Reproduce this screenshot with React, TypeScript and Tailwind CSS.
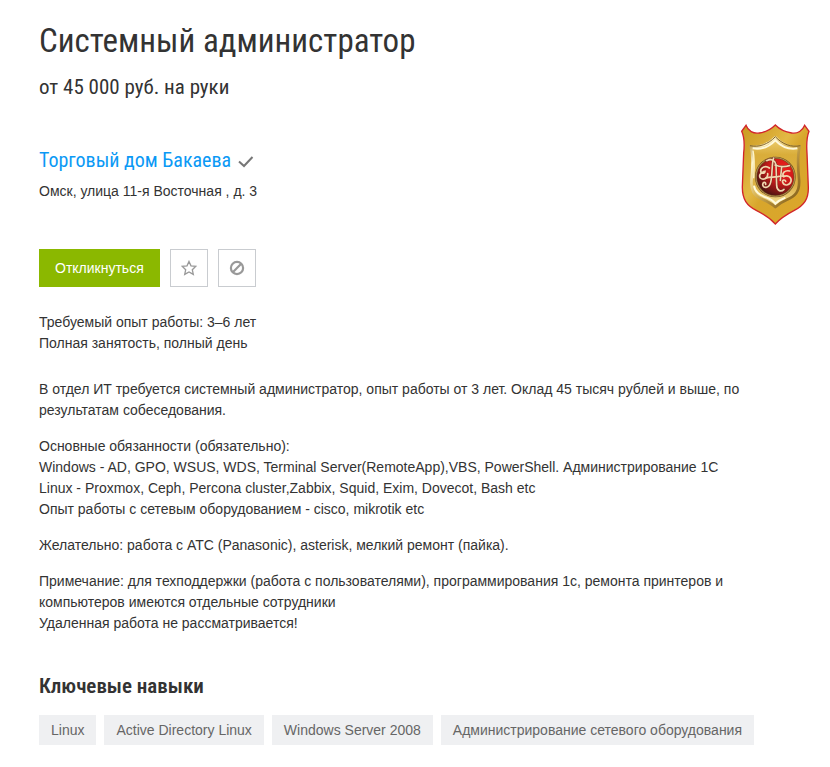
const bodyFont = "font-['Liberation_Sans',Arial,sans-serif]";
const headFont = "font-['Roboto_Condensed',Roboto,sans-serif]";

const skills = ['Linux', 'Active Directory Linux', 'Windows Server 2008', 'Администрирование сетевого оборудования'];

function CompanyLogo() {
  return (
    <svg role="img" aria-label="Торговый дом Бакаева" viewBox="45 25 207 303" className="h-[101px] w-[69px] shrink-0">
      <defs>
        <linearGradient id="gold" x1="0" y1="0" x2="1" y2="1">
          <stop offset="0" stopColor="#c99a20" />
          <stop offset=".25" stopColor="#d9ab35" />
          <stop offset=".4" stopColor="#e3b944" />
          <stop offset=".52" stopColor="#d8a62c" />
          <stop offset="1" stopColor="#dba62a" />
        </linearGradient>
        <linearGradient id="bevel" x1="0" y1="0" x2="1" y2="1">
          <stop offset="0" stopColor="#a8822c" />
          <stop offset=".2" stopColor="#fff6cf" />
          <stop offset=".45" stopColor="#d9b75c" />
          <stop offset=".7" stopColor="#a88231" />
          <stop offset="1" stopColor="#7d5b17" />
        </linearGradient>
        <linearGradient id="face" x1="0" y1="0" x2="0" y2="1">
          <stop offset="0" stopColor="#efd175" />
          <stop offset=".25" stopColor="#d9ad3a" />
          <stop offset=".7" stopColor="#dcb146" />
          <stop offset="1" stopColor="#f6e4a0" />
        </linearGradient>
        <radialGradient id="ruby" cx=".7" cy=".28" r=".75">
          <stop offset="0" stopColor="#f0201c" />
          <stop offset=".5" stopColor="#c91a1a" />
          <stop offset="1" stopColor="#511512" />
        </radialGradient>
      </defs>
      <path d="M60 29C66 46 82 55 100 52C122 49 137 39 148 28C160 40 177 49 197 52C215 55 230 45 236 29L249 47C241 68 241 86 243 112L247 215C248 250 234 269 205 284C180 297 162 309 148 325C133 308 116 297 92 285C62 270 49 251 49 215L53 112C56 86 56 66 47 47Z" fill="url(#gold)" stroke="#d2242a" strokeWidth="4" />
      <path d="M74 92C98 98 128 87 148 65C168 87 197 98 221 92C214 118 215 148 219 190C222 229 207 242 181 253C165 260 156 266 148 274C139 265 126 258 109 251C83 240 74 224 77 190C80 148 82 118 74 92Z" fill="url(#face)" stroke="url(#bevel)" strokeWidth="8" strokeLinejoin="round" />
      <path d="M72 90C98 96 127 86 148 63C169 86 197 96 223 90" fill="none" stroke="#846423" strokeWidth="3" />
      <path d="M80 98C104 102 130 93 148 74C166 93 190 102 214 98" fill="none" stroke="#fff9dc" strokeWidth="6" />
      <path d="M81 105C87 130 85 155 83 188" fill="none" stroke="#fff5c8" strokeWidth="4" />
      <path d="M84 210C86 230 103 238 122 246C135 251 143 257 148 264C156 256 165 251 178 246" fill="none" stroke="#fffadb" strokeWidth="6" />
      <circle cx="148" cy="184" r="58" fill="url(#ruby)" stroke="#73511f" strokeWidth="6" />
      <circle cx="148" cy="184" r="58" fill="none" stroke="#d5b16a" strokeWidth="2" />
      <g transform="translate(83 118)" fill="none" strokeLinecap="round">
        <g stroke="#6b1d17" strokeWidth="7">
          <path d="M39 17C52 10 64 15 67 29L69 92C70 108 82 112 91 103" />
          <path d="M60 9C53 30 57 58 51 82C46 101 28 101 27 89" />
          <path d="M64 30C79 36 90 37 107 32M84 36L80 75" />
        </g>
        <g stroke="#f0d7b0" strokeWidth="5">
          <path d="M39 17C52 10 64 15 67 29L69 92C70 108 82 112 91 103" />
          <path d="M60 9C53 30 57 58 51 82C46 101 28 101 27 89C27 80 37 80 36 88" />
          <path d="M64 30C79 36 90 37 107 32M84 36L80 76" />
          <path d="M47 39C37 31 22 36 21 47C21 57 34 57 34 49C22 51 14 61 20 69C29 77 44 69 42 56" />
          <path d="M108 48C94 45 83 54 90 65C101 58 115 67 112 79C108 92 91 94 87 82C84 75 94 72 96 79" />
          <path d="M36 70C49 64 59 68 72 65C79 63 84 62 92 64" />
        </g>
      </g>
    </svg>
  );
}

export default function App() {
  return (
    <main className={`${bodyFont} bg-white pt-5 pr-5 pb-5 pl-[39px] text-sm leading-[21px] text-[#333]`}>
      <header>
        <h1 className={`${headFont} text-[33px] leading-[42px]`}>Системный администратор</h1>
        <p className={`${headFont} mt-3 text-[21px] leading-[26px]`}>от 45 000 руб. на руки</p>
      </header>

      <section className="mt-6 flex items-start justify-between">
        <div className="pt-[23px]">
          <div className="flex items-center gap-[7px]">
            <a href="#company" className={`${headFont} text-[20px] leading-[26px] text-[#0b99f5]`}>Торговый дом Бакаева</a>
            <svg aria-label="Проверенная компания" viewBox="0 0 16 14" className="mt-1 h-3.5 w-4" fill="none" stroke="#777" strokeWidth="2">
              <path d="M1 6.5L6 11L14.5 2" />
            </svg>
          </div>
          <p className="mt-2">Омск, улица 11-я Восточная , д. 3</p>
        </div>
        <CompanyLogo />
      </section>

      <div className="mt-6 flex gap-2.5">
        <button type="button" className="h-[38px] bg-[#8bb800] px-4 text-white">Откликнуться</button>
        <button type="button" aria-label="В избранное" className="flex size-[38px] items-center justify-center border border-[#c9ccd0]">
          <svg viewBox="0 0 16 16" className="size-4" fill="none" stroke="#999" strokeWidth="1.3" strokeLinejoin="miter">
            <path d="M8 1.4L10 5.8L14.8 6.3L11.3 9.7L12.3 14.4L8 12L3.7 14.4L4.7 9.7L1.2 6.3L6 5.8Z" />
          </svg>
        </button>
        <button type="button" aria-label="Скрыть вакансию" className="flex size-[38px] items-center justify-center border border-[#c9ccd0]">
          <svg viewBox="0 0 16 16" className="size-4" fill="none" stroke="#999" strokeWidth="2.2">
            <circle cx="8" cy="8" r="6.1" />
            <path d="M3.8 12.2L12.2 3.8" />
          </svg>
        </button>
      </div>

      <div className="mt-[25px]">
        <p>Требуемый опыт работы: 3–6 лет</p>
        <p>Полная занятость, полный день</p>
      </div>

      <section className="mt-[25px] space-y-[15px] pr-6">
        <p>В отдел ИТ требуется системный администратор, опыт работы от 3 лет. Оклад 45 тысяч рублей и выше, по результатам собеседования.</p>
        <p>
          Основные обязанности (обязательно):<br />
          Windows - AD, GPO, WSUS, WDS, Terminal Server(RemoteApp),VBS, PowerShell. Администрирование 1С<br />
          Linux - Proxmox, Ceph, Percona cluster,Zabbix, Squid, Exim, Dovecot, Bash etc<br />
          Опыт работы с сетевым оборудованием - cisco, mikrotik etc
        </p>
        <p>Желательно: работа с АТС (Panasonic), asterisk, мелкий ремонт (пайка).</p>
        <p>
          Примечание: для техподдержки (работа с пользователями), программирования 1с, ремонта принтеров и компьютеров имеются отдельные сотрудники<br />
          Удаленная работа не рассматривается!
        </p>
      </section>

      <section className="mt-[39px]">
        <h2 className={`${headFont} text-[21px] leading-[26px] font-semibold`}>Ключевые навыки</h2>
        <ul className="mt-4 flex flex-wrap gap-2">
          {skills.map((skill) => (
            <li key={skill} className="bg-[#eff0f2] px-3 py-1 leading-[22px] text-[#666]">{skill}</li>
          ))}
        </ul>
      </section>
    </main>
  );
}
